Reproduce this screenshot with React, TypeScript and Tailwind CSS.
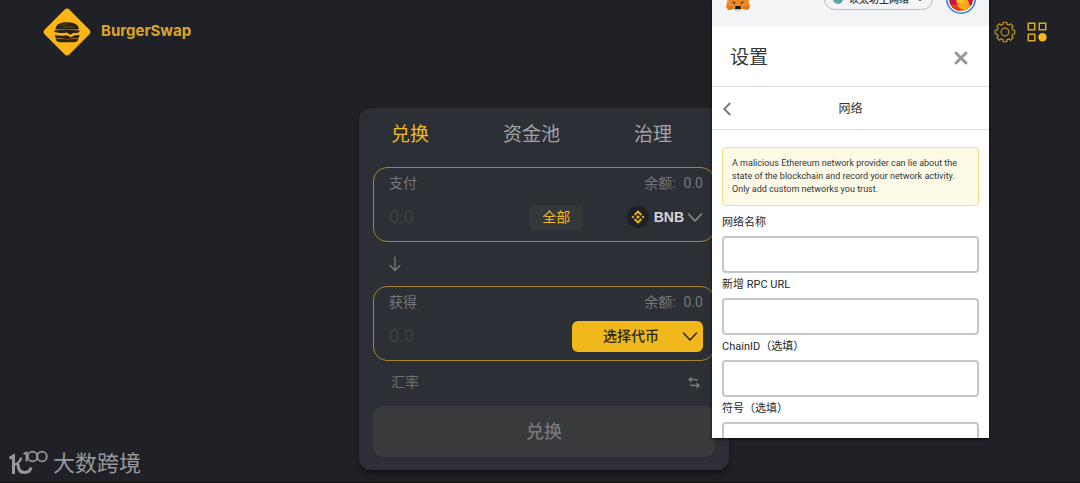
import { ChevronLeft, X } from "lucide-react"
import { useState } from "react"

const tabs = ["兑换", "资金池", "治理"]

const networkFields = [
  { id: "network-name", label: "网络名称" },
  { id: "rpc-url", label: "新增 RPC URL" },
  { id: "chain-id", label: "ChainID（选填）" },
  { id: "symbol", label: "符号（选填）" },
]

// Eight teeth, four corners each
const gearPoints = Array.from({ length: 8 })
  .flatMap((_, i) =>
    [
      [-15, 8.6],
      [-11, 10.8],
      [11, 10.8],
      [15, 8.6],
    ].map(([offset, radius]) => {
      const angle = ((i * 45 + offset) * Math.PI) / 180
      return `${(12 + radius * Math.sin(angle)).toFixed(2)},${(12 - radius * Math.cos(angle)).toFixed(2)}`
    }),
  )
  .join(" ")

function BurgerLogo() {
  return (
    <svg viewBox="0 0 48 48" className="size-12" aria-hidden="true">
      <path d="M21.5 1.8a3.5 3.5 0 0 1 5 0l19.7 19.7a3.5 3.5 0 0 1 0 5L26.5 46.2a3.5 3.5 0 0 1-5 0L1.8 26.5a3.5 3.5 0 0 1 0-5z" fill="#fbb616" />
      <g fill="#2a2216">
        <path d="M12.5 21.5c0-5 4.5-7.3 11.5-7.3s11.8 2.3 11.8 7.3z" />
        <path d="M11.5 22.6q12-1.5 25 0v1.5q-3 1.8-6 .6l-3 2-4-2.2q-6 1.6-12-.4z" />
        <path d="M12 27q6 1.4 11.5.2l4.5 2 4-2 4.5-.2-.6 2.800q-12 2.200-23.400 0z" />
        <path d="M12.6 30.2q11.4 2 22.8 0c0 2.6-2 4-5 4H17.5c-3 0-4.9-1.4-4.9-4z" />
      </g>
      <path d="M11.5 25.4q7 .8 12.5.2l4 2.4 4-2.4h4.5" fill="none" stroke="#fbb616" strokeWidth="0.9" />
      <path d="M16.5 18.5q4-3 9-2.8M20 19.5q5-1.5 11-.5" fill="none" stroke="#a97d1b" strokeWidth="0.5" />
    </svg>
  )
}

function GearIcon() {
  return (
    <svg viewBox="0 0 24 24" className="size-[22px]" fill="none" stroke="#b78c1e" strokeWidth="1.4" strokeLinejoin="round" aria-hidden="true">
      <polygon points={gearPoints} />
      <circle cx="12" cy="12" r="4.3" />
    </svg>
  )
}

function AppsIcon() {
  return (
    <svg viewBox="0 0 20 20" className="size-5" fill="none" stroke="#d9a81f" strokeWidth="1.5" aria-hidden="true">
      <rect x="1.25" y="1.25" width="6.5" height="6.5" />
      <rect x="12.25" y="1.25" width="6.5" height="6.5" />
      <rect x="1.25" y="12.25" width="6.5" height="6.5" />
      <circle cx="15.5" cy="15.2" r="4.2" fill="#f4ba1b" stroke="none" />
    </svg>
  )
}

function BnbIcon() {
  return (
    <svg viewBox="0 0 22 22" className="size-[22px]" aria-hidden="true">
      <circle cx="11" cy="11" r="11" fill="#1e2026" />
      <path d="M7.6 9 11 5.6 14.4 9M7.6 13l3.4 3.4 3.4-3.4" fill="none" stroke="#f0b90b" strokeWidth="1.9" />
      <g fill="#f0b90b">
        <path d="m11 9.1 1.9 1.9-1.9 1.9L9.1 11z" />
        <path d="m5.9 9.6 1.4 1.4-1.4 1.4L4.5 11z" />
        <path d="m16.1 9.6 1.4 1.4-1.4 1.4-1.4-1.4z" />
      </g>
    </svg>
  )
}

function WideChevron({ className }: { className: string }) {
  return (
    <svg viewBox="0 0 16 16" className={className} fill="none" stroke="currentColor" strokeWidth="1.5" strokeLinecap="round" strokeLinejoin="round" aria-hidden="true">
      <path d="M1.5 5 8 12l6.5-7" />
    </svg>
  )
}

function DownArrow() {
  return (
    <svg viewBox="0 0 12 16" className="h-4 w-3" fill="none" stroke="#7d8084" strokeWidth="1.2" strokeLinecap="round" strokeLinejoin="round" aria-hidden="true">
      <path d="M6 1v13.5M1 9.5l5 5 5-5" />
    </svg>
  )
}

function SwapIcon() {
  return (
    <svg viewBox="0 0 14 14" className="size-[14px]" fill="none" stroke="#777a7e" strokeWidth="1.6" aria-hidden="true">
      <path d="M4 4.5h4.5q1.500 0 1.500 1.500M10 10.500H5.500q-1.500 0-1.500-1.500" />
      <path d="M4.5 1.5v6L1 4.500zM9.500 7.500v6L13.300 10.500z" fill="#777a7e" stroke="none" />
    </svg>
  )
}

function FoxIcon() {
  return (
    <svg viewBox="0 0 26 24" className="h-6 w-[26px]" aria-hidden="true">
      <path d="M2 0l8 5h6l8-5 1 9-1.5 5 1.5 5-2 4-6-1.500-2 2h-4l-2-2L3 23l-2-4 1.500-5L1 9z" fill="#f08a24" />
      <path d="M1 19h7l1 3-6 1zM25 19h-7l-1 3 6 1z" fill="#e2761b" />
      <path d="M6.500 14l4 1.500-1 2zM19.500 14l-4 1.500 1 2z" fill="#4a3a2a" />
      <path d="M9 21l2-1.500h4l2 1.500-1.500 3h-5z" fill="#d8c4b0" />
      <path d="M10.500 19h5l.7 3H9.800z" fill="#161616" />
    </svg>
  )
}

function AccountAvatar() {
  return (
    <svg viewBox="0 0 30 30" className="size-[30px]" aria-hidden="true">
      <circle cx="15" cy="15" r="14.2" fill="#fff" stroke="#2f80d8" strokeWidth="1.6" />
      <clipPath id="avatar">
        <circle cx="15" cy="15" r="12" />
      </clipPath>
      <g clipPath="url(#avatar)">
        <rect width="30" height="30" fill="#f26a1b" />
        <path d="M0 10h8l3 11-5 4H0z" fill="#c8144c" />
        <path d="M6 20l6 1 3 7H6z" fill="#e23b25" />
        <path d="M11 22l10-9 6 6-8 8z" fill="#f9a61a" />
        <path d="M10 8h11l-4 12-6-1z" fill="#fac12a" />
        <path d="M21 13l8-1v9l-5 1z" fill="#c8144c" />
      </g>
    </svg>
  )
}

function Balance() {
  return (
    <div className="flex gap-2">
      <span>余额:</span>
      <span>0.0</span>
    </div>
  )
}

function AmountInput({ id }: { id: string }) {
  return (
    <input
      id={id}
      type="text"
      placeholder="0.0"
      className="w-0 min-w-0 flex-1 bg-transparent text-lg text-gray-200 outline-none placeholder:text-[#3d4044]"
    />
  )
}

function SwapCard() {
  const [active, setActive] = useState(tabs[0])

  return (
    <section className="w-full max-w-[370px] rounded-xl bg-[#2c2f35] px-[14px] pb-[13px] shadow-md shadow-black/40">
      <div className="flex h-[59px] items-center justify-between pr-[43px] pb-1.5 pl-[18px]">
        {tabs.map((tab) => (
          <button
            key={tab}
            type="button"
            onClick={() => setActive(tab)}
            className={tab === active ? "text-[19px] leading-6 text-[#f0b91d]" : "text-[19px] leading-6 text-[#a3a4a6]"}
          >
            {tab}
          </button>
        ))}
      </div>

      <div className="h-[75px] rounded-[14px] border border-[#a4852a] pt-[5px] pr-[11px] pl-[15px] text-sm text-[#74777b]">
        <div className="flex justify-between leading-5">
          <label htmlFor="pay-amount">支付</label>
          <Balance />
        </div>
        <div className="mt-2 flex h-8 items-center">
          <AmountInput id="pay-amount" />
          <button type="button" className="mr-11 h-[25px] w-[53px] rounded bg-[#35383a] text-sm text-[#efb91f]">
            全部
          </button>
          <button type="button" className="flex items-center font-bold text-[#d5d6d8]">
            <BnbIcon />
            <span className="ml-[5px] font-['Liberation_Sans',sans-serif] text-sm">BNB</span>
            <WideChevron className="ml-[3px] size-4 text-[#8d8f93]" />
          </button>
        </div>
      </div>

      <div className="flex h-11 items-center px-4">
        <button type="button" aria-label="切换">
          <DownArrow />
        </button>
      </div>

      <div className="h-[75px] rounded-[14px] border border-[#a4852a] pt-[5px] pr-[11px] pl-[15px] text-sm text-[#74777b]">
        <div className="flex justify-between leading-5">
          <label htmlFor="get-amount">获得</label>
          <Balance />
        </div>
        <div className="mt-2 flex h-8 items-center">
          <AmountInput id="get-amount" />
          <button type="button" className="flex h-[31px] w-[131px] items-center rounded-md bg-[#f0b81b] pr-[5px] text-sm font-medium text-[#2b2617]">
            <span className="flex-1 pl-2">选择代币</span>
            <WideChevron className="size-4" />
          </button>
        </div>
      </div>

      <div className="flex h-[45px] items-center justify-between pr-[14px] pb-1 pl-[18px] text-sm text-[#6d7074]">
        <span>汇率</span>
        <button type="button" aria-label="反转汇率">
          <SwapIcon />
        </button>
      </div>

      <button type="button" disabled className="h-[51px] w-full rounded-[10px] bg-[#393a3b] pt-px text-lg font-medium text-[#77787a]">
        兑换
      </button>
    </section>
  )
}

function WalletPopup() {
  return (
    <aside className="absolute top-0 right-[91px] h-[438px] w-[277px] overflow-hidden bg-white text-[#33363a] shadow-sm shadow-black/60">
      {/* header is scrolled half way out of the window */}
      <div className="-mt-7 flex h-[54px] items-center bg-[#f2f4f6] px-[13px]">
        <FoxIcon />
        <button type="button" className="ml-auto flex h-[22px] w-[109px] items-center rounded-full border border-[#b9bdc1] px-2 text-[10px]">
          <span className="mr-1.5 size-2.5 rounded-full bg-[#5aa6a0]" />
          <span className="font-medium whitespace-nowrap">以太坊主网络</span>
          <WideChevron className="ml-auto size-2 shrink-0" />
        </button>
        <button type="button" className="ml-[13px]" aria-label="账户">
          <AccountAvatar />
        </button>
      </div>

      <div className="flex h-[61px] items-center justify-between border-b border-[#dcdee0] px-[18px] pt-1">
        <h1 className="text-[19px]">设置</h1>
        <button type="button" aria-label="关闭">
          <X className="size-5 text-[#949699]" strokeWidth={3.5} />
        </button>
      </div>

      <div className="relative flex h-[43px] items-center justify-center border-b border-[#dcdee0] pt-0.5">
        <button type="button" aria-label="返回" className="absolute left-1">
          <ChevronLeft className="size-[22px] text-[#77797c]" strokeWidth={2} />
        </button>
        <h2 className="text-xs">网络</h2>
      </div>

      <div className="px-2.5 pt-[17px]">
        <p className="rounded border border-[#f3dc83] bg-[#fefae8] px-[9px] py-[9px] text-[9px] leading-[13px]">
          A malicious Ethereum network provider can lie about the state of the blockchain and record your network activity. Only
          add custom networks you trust.
        </p>
        <div className="mt-[9px]">
          {networkFields.map((field) => (
            <div key={field.id} className="mb-1">
              <label htmlFor={field.id} className="block h-[21px] text-[11px] leading-4 text-[#26282b]">
                {field.label}
              </label>
              <input id={field.id} type="text" className="block h-[37px] w-full rounded border-2 border-[#c3c7cb] px-2 text-xs" />
            </div>
          ))}
        </div>
      </div>
    </aside>
  )
}

function Watermark() {
  return (
    <div className="absolute bottom-0.5 left-[9px] flex items-center gap-1 text-[#98999c]">
      <svg viewBox="0 0 40 28" className="h-7 w-10" fill="none" stroke="currentColor" aria-hidden="true">
        <path d="M.5 8.5 4.500 6v18" strokeWidth="3" />
        <path d="M12 7.500q-.5 5-6 7" strokeWidth="2.500" />
        <path d="M9 14q0 8.500 6.500 8.500 5.500 0 6.500-5" strokeWidth="3" />
        <path d="M14.500 4l3-1.500v9" strokeWidth="1.8" />
        <circle cx="23.500" cy="6.500" r="4.800" strokeWidth="1.8" />
        <circle cx="33" cy="6.500" r="4.800" strokeWidth="1.8" />
      </svg>
      <span className="text-[22px] leading-8">大数跨境</span>
    </div>
  )
}

export default function App() {
  return (
    <div className="relative min-h-screen overflow-hidden border-b border-[#161015] bg-[#202126] font-['Roboto','Noto_Sans_CJK_SC',sans-serif]">
      <header className="flex items-center justify-between pt-2 pr-[33px] pl-[43px]">
        <a href="#" className="flex items-center gap-2.5 font-['Inter',sans-serif] text-[15px] font-bold text-[#dba624]">
          <BurgerLogo />
          <span className="pb-0.5">BurgerSwap</span>
        </a>
        <div className="flex items-center gap-[11px]">
          <button type="button" aria-label="设置">
            <GearIcon />
          </button>
          <button type="button" aria-label="应用">
            <AppsIcon />
          </button>
        </div>
      </header>
      <main className="flex justify-center pt-[52px] pb-3 pl-2">
        <SwapCard />
      </main>
      <WalletPopup />
      <Watermark />
    </div>
  )
}
